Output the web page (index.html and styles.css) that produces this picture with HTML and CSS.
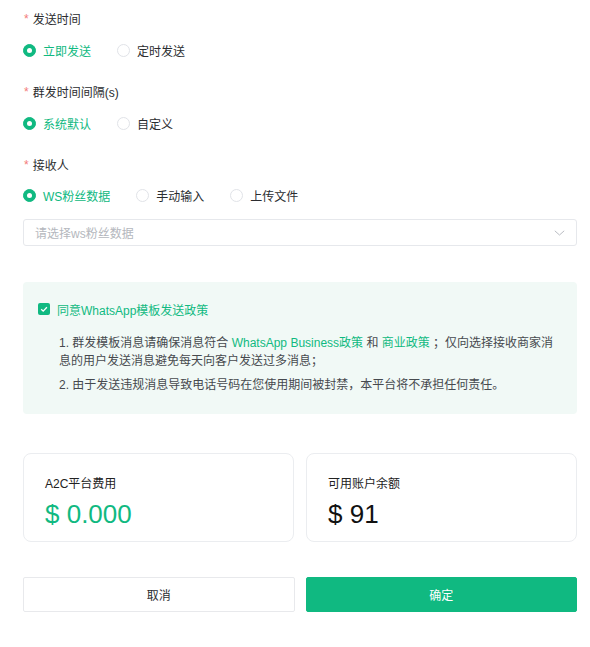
FILE: index.html
```html
<!DOCTYPE html>
<html lang="zh-CN">
<head>
<meta charset="utf-8">
<title>发送设置</title>
<link rel="stylesheet" href="styles.css">
</head>
<body>
<div class="page">
  <div class="form-item">
    <div class="label"><span class="req">*</span>发送时间</div>
    <div class="radio-group">
      <label class="radio checked"><span class="dot"></span><span class="txt">立即发送</span></label>
      <label class="radio"><span class="dot"></span><span class="txt">定时发送</span></label>
    </div>
  </div>
  <div class="form-item">
    <div class="label"><span class="req">*</span>群发时间间隔(s)</div>
    <div class="radio-group">
      <label class="radio checked"><span class="dot"></span><span class="txt">系统默认</span></label>
      <label class="radio"><span class="dot"></span><span class="txt">自定义</span></label>
    </div>
  </div>
  <div class="form-item last">
    <div class="label"><span class="req">*</span>接收人</div>
    <div class="radio-group tight">
      <label class="radio checked"><span class="dot"></span><span class="txt">WS粉丝数据</span></label>
      <label class="radio"><span class="dot"></span><span class="txt">手动输入</span></label>
      <label class="radio"><span class="dot"></span><span class="txt">上传文件</span></label>
    </div>
    <div class="select">
      <span class="placeholder">请选择ws粉丝数据</span>
      <svg class="chev" width="11" height="6" viewBox="0 0 11 6"><path d="M0.8 0.8 L5.5 5 L10.2 0.8" fill="none" stroke="#b9bcc2" stroke-width="1"/></svg>
    </div>
  </div>

  <div class="policy">
    <div class="agree">
      <svg class="cb" width="12" height="12" viewBox="0 0 12 12"><rect x="0" y="0" width="12" height="12" rx="2" fill="#10b981"/><path d="M3.2 6.2 L5.2 8.1 L8.9 4.2" fill="none" stroke="#fff" stroke-width="1.3"/></svg>
      <span>同意WhatsApp模板发送政策</span>
    </div>
    <div class="rules">
      <p>1. 群发模板消息请确保消息符合 <a class="link">WhatsApp Business政策</a> 和 <a class="link">商业政策</a> ；仅向选择接收商家消<br>息的用户发送消息避免每天向客户发送过多消息；</p>
      <p>2. 由于发送违规消息导致电话号码在您使用期间被封禁，本平台将不承担任何责任。</p>
    </div>
  </div>

  <div class="cards">
    <div class="card">
      <div class="card-label">A2C平台费用</div>
      <div class="amount green">$ 0.000</div>
    </div>
    <div class="card">
      <div class="card-label">可用账户余额</div>
      <div class="amount">$ 91</div>
    </div>
  </div>

  <div class="actions">
    <button class="btn cancel">取消</button>
    <button class="btn confirm">确定</button>
  </div>
</div>
</body>
</html>
```
FILE: styles.css
```css
* { box-sizing: border-box; }
html, body { margin: 0; padding: 0; background: #fff; }
body {
  font-family: "Liberation Sans", "Noto Sans CJK SC", sans-serif;
  font-size: 12px;
  color: #2b2d30;
}
.page {
  padding: 10px 13px 0 23px;
}
.form-item { margin-bottom: 23px; }
.form-item.last { margin-bottom: 0; }
.label {
  height: 20px;
  line-height: 20px;
  display: flex;
  align-items: center;
}
.req {
  color: #f37a7a;
  margin: 0 4px 0 1px;
  font-size: 12px;
  position: relative;
  top: -1px;
}
.radio-group {
  margin-top: 10px;
  height: 20px;
  display: flex;
  align-items: center;
}
.radio-group.tight { margin-top: 9px; }
.radio {
  display: inline-flex;
  align-items: center;
  margin-right: 26px;
  cursor: pointer;
}
.dot {
  width: 13px;
  height: 13px;
  border-radius: 50%;
  border: 1px solid #e1e3e8;
  background: #fff;
  margin-right: 7px;
  flex: none;
}
.radio.checked .dot {
  border-color: #10b981;
  background: #10b981;
  position: relative;
}
.radio.checked .dot::after {
  content: "";
  position: absolute;
  left: 50%;
  top: 50%;
  width: 5px;
  height: 5px;
  margin: -2.5px 0 0 -2.5px;
  border-radius: 50%;
  background: #fff;
}
.radio.checked .txt { color: #10b981; }
.select {
  margin-top: 14px;
  height: 27px;
  border: 1px solid #e6e8ec;
  border-radius: 3px;
  display: flex;
  align-items: center;
  justify-content: space-between;
  padding: 0 11px 0 11px;
}
.placeholder { color: #b4b7bd; }
.chev { display: block; }

.policy {
  margin-top: 36px;
  height: 132px;
  background: #f1f9f6;
  border-radius: 4px;
  padding: 18px 8px 0 15px;
}
.agree {
  height: 18px;
  display: flex;
  align-items: center;
  color: #10b981;
}
.cb { margin-right: 7px; display: block; }
.rules {
  margin-top: 16px;
  padding-left: 21px;
  color: #46494e;
  line-height: 18px;
}
.rules p { margin: 0 0 6px; }
.link { color: #10b981; text-decoration: none; }

.cards {
  margin-top: 39px;
  display: grid;
  grid-template-columns: 1fr 1fr;
  gap: 12px;
}
.card {
  height: 89px;
  border: 1px solid #ebedf0;
  border-radius: 8px;
  padding: 21px 21px 0;
}
.card-label {
  line-height: 18px;
  color: #222;
}
.amount {
  margin-top: 6px;
  font-size: 26px;
  line-height: 30px;
  color: #111;
  font-family: "Liberation Sans", sans-serif;
}
.amount.green { color: #10b981; }

.actions {
  margin-top: 35px;
  display: grid;
  grid-template-columns: 1fr 1fr;
  gap: 11px;
}
.btn {
  height: 35px;
  font-family: inherit;
  font-size: 12px;
  border-radius: 2px;
  cursor: pointer;
}
.cancel {
  background: #fff;
  border: 1px solid #e8e9ec;
  color: #2b2d30;
}
.confirm {
  background: #10b981;
  border: 1px solid #10b981;
  color: #fff;
}
```
